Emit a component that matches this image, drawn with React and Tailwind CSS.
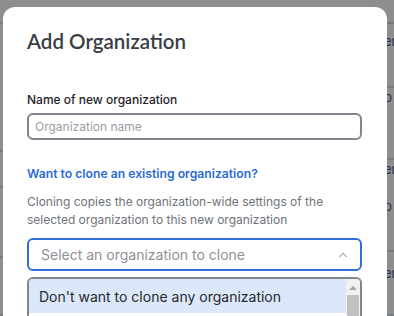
import { ChevronUp } from "lucide-react";

const LEFT_ROWS = [24, 128, 36, 70, 58];
const RIGHT_ROWS = [
  { h: 24, pt: 0, items: [] },
  { h: 64, pt: 9, items: ["er"] },
  { h: 72, pt: 1, items: ["b"] },
  { h: 92, pt: 1, items: ["er", "b"] },
  { h: 64, pt: 13, items: ["er"] },
];

function Backdrop() {
  return (
    <div className="flex h-[316px] w-full bg-[#8e8e8e]">
      <div className="flex w-[3px] flex-col">
        {LEFT_ROWS.map((h, i) => (
          <div key={i} style={{ height: h }} className="shrink-0 border-b-2 border-[#777a7e]" />
        ))}
      </div>
      <div className="flex-1">
        <div className="h-[24px] border-b-2 border-[#777a7e]" />
      </div>
      <div className="flex w-[7px] flex-col overflow-hidden">
        {RIGHT_ROWS.map((r, i) => (
          <div
            key={i}
            style={{ height: r.h, paddingTop: r.pt }}
            className="flex shrink-0 flex-col gap-[21px] border-b-2 border-[#777a7e] text-[13px] leading-4 text-[#1e3552]"
          >
            {r.items.map((t, j) => (
              <span key={j} className="-ml-[3px] whitespace-nowrap">{t}</span>
            ))}
          </div>
        ))}
      </div>
    </div>
  );
}

export default function App() {
  return (
    <div className="relative h-[316px] w-[394px] overflow-hidden font-['Inter',sans-serif]">
      <Backdrop />

      {/* Modal */}
      <div className="absolute left-[3px] top-[7px] h-[320px] w-[384px] rounded-xl bg-white pl-6 pr-[25px] pt-5">
        <h2 className="font-['Lato',sans-serif] text-[20.5px] font-semibold leading-7 text-[#3a3e45]">
          Add Organization
        </h2>

        <label className="mt-[35px] block text-[12px] font-medium leading-5 text-[#1f2329]">
          Name of new organization
        </label>
        <div className="mt-[3px] flex h-[27px] items-center rounded-md border-2 border-[#7f8690] px-[6px]">
          <span className="text-[12px] text-[#9a9ea5]">Organization name</span>
        </div>

        <p className="mt-6 text-[12.2px] font-semibold leading-5 text-[#2c6bd5]">
          Want to clone an existing organization?
        </p>
        <p className="mt-[9px] text-[12px] leading-[18px] text-[#6f737a]">
          Cloning copies the organization-wide settings of the selected organization to this new organization
        </p>

        <div className="mt-[9px] flex h-[33px] items-center justify-between rounded-md border-2 border-[#2f6fd8] pl-3 pr-[10px]">
          <span className="text-[14px] text-[#8d9198]">Select an organization to clone</span>
          <ChevronUp size={14} strokeWidth={1.75} className="text-[#8d9198]" />
        </div>

        <div className="mt-[6px] flex h-[60px] overflow-hidden rounded-t-md border-2 border-b-0 border-[#7f8690]">
          <div className="flex-1">
            <div className="flex h-[34px] items-center bg-[#dbe7fb] pl-[10px] text-[14px] text-[#2a2a2a]">
              Don't want to clone any organization
            </div>
          </div>
          <div className="flex w-[14px] flex-col items-center bg-[#f1f1f1]">
            <div className="mt-[7px] h-0 w-0 border-x-[4px] border-b-[4px] border-x-transparent border-b-[#a3a3a3]" />
            <div className="mt-[5px] h-full w-[12px] bg-[#c1c1c1]" />
          </div>
        </div>
      </div>
    </div>
  );
}
